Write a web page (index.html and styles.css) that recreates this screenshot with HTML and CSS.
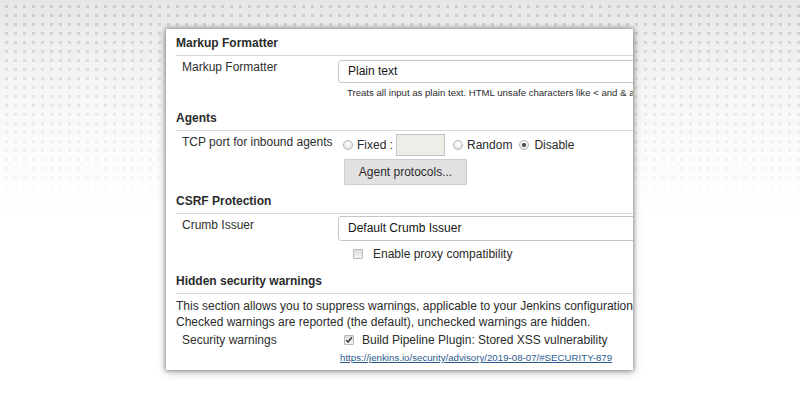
FILE: index.html
```html
<!DOCTYPE html>
<html>
<head>
<meta charset="utf-8">
<link rel="stylesheet" href="styles.css">
</head>
<body>
<div class="stage">
  <div class="panel">
    <div class="head">Markup Formatter</div>
    <div class="row">
      <div class="label">Markup Formatter</div>
      <div class="field">
        <div class="select sel-markup">Plain text</div>
        <div class="help">Treats all input as plain text. HTML unsafe characters like &lt; and &amp; are escaped to their respective character entities.</div>
      </div>
    </div>

    <div class="head head-agents">Agents</div>
    <div class="row">
      <div class="label">TCP port for inbound agents</div>
      <div class="field field-tcp">
        <div class="options">
          <input type="radio" name="port" class="radio r-fixed"><span class="opt-text">Fixed :</span>
          <input type="text" class="port">
          <input type="radio" name="port" class="radio r-random"><span class="opt-text">Random</span>
          <input type="radio" name="port" class="radio r-disable" checked><span class="opt-text">Disable</span>
        </div>
        <button class="btn">Agent protocols...</button>
      </div>
    </div>

    <div class="head head-csrf">CSRF Protection</div>
    <div class="row">
      <div class="label">Crumb Issuer</div>
      <div class="field field-crumb">
        <div class="select sel-crumb">Default Crumb Issuer</div>
        <div class="check-row check-proxy">
          <input type="checkbox" class="check"><span class="check-text">Enable proxy compatibility</span>
        </div>
      </div>
    </div>

    <div class="head head-hidden">Hidden security warnings</div>
    <p class="para">This section allows you to suppress warnings, applicable to your Jenkins configuration, from being shown in the UI.<br>Checked warnings are reported (the default), unchecked warnings are hidden.</p>
    <div class="row row-sec">
      <div class="label label-sec">Security warnings</div>
      <div class="field">
        <div class="check-row check-sec">
          <input type="checkbox" class="check" checked><span class="check-text sec-text">Build Pipeline Plugin: Stored XSS vulnerability</span>
        </div>
        <a class="link" href="#">https://jenkins.io/security/advisory/2019-08-07/#SECURITY-879</a>
      </div>
    </div>
  </div>
</div>
</body>
</html>
```

FILE: styles.css
```css
html, body {
  margin: 0;
  padding: 0;
}

body {
  width: 800px;
  height: 400px;
  overflow: hidden;
  background:
    linear-gradient(to bottom, rgba(255,255,255,0) 0px, rgba(255,255,255,0.5) 90px, #ffffff 220px),
    radial-gradient(circle, #c9c9c9 0 1.4px, rgba(201,201,201,0) 1.9px) 2px 2px / 9px 9px,
    linear-gradient(to bottom, #e6e6e6 0px, #f2f2f2 150px, #ffffff 300px);
  font-family: "Liberation Sans", Arial, sans-serif;
}

.stage {
  box-sizing: border-box;
  height: 400px;
  padding: 29px 0 0 166px;
}

.panel {
  box-sizing: border-box;
  width: 467px;
  height: 341px;
  padding-left: 10px;
  background: #ffffff;
  overflow: hidden;
  box-shadow: 0 0 4px 1px rgba(0,0,0,0.32), 0 2px 9px rgba(0,0,0,0.25);
  font-size: 12px;
  color: #2b2b2b;
}

.head {
  padding: 7px 0 5px;
  line-height: 14px;
  font-weight: bold;
  color: #2b2b2b;
  border-bottom: 1px solid #d9d9d9;
  white-space: nowrap;
}

.head-agents { margin-top: 5px; }
.head-csrf { margin-top: 2px; }
.head-hidden { margin-top: 6px; }

.row {
  display: flex;
  align-items: flex-start;
}

.label {
  flex: none;
  box-sizing: border-box;
  width: 162px;
  padding: 4px 0 0 6px;
  line-height: 14px;
  white-space: nowrap;
  color: #2e2e2e;
}

.field {
  flex: none;
  width: 440px;
  padding-top: 4px;
}

.select {
  box-sizing: border-box;
  width: 420px;
  height: 23px;
  line-height: 21px;
  padding-left: 9px;
  border: 1px solid #c6c6c6;
  border-radius: 3px;
  background: #ffffff;
  color: #151515;
  white-space: nowrap;
}

.help {
  margin-top: 4px;
  padding-left: 9px;
  font-size: 9.6px;
  line-height: 12px;
  white-space: nowrap;
  color: #2b2b2b;
}

.field-tcp { padding-top: 3px; }

.options {
  display: flex;
  align-items: center;
  height: 22px;
}

.radio {
  -webkit-appearance: none;
  appearance: none;
  box-sizing: border-box;
  width: 10px;
  height: 10px;
  margin: 0;
  border-radius: 50%;
  border: 1px solid #b4b4b4;
  background: radial-gradient(circle at 50% 35%, #ffffff 0, #e0e0e0 100%);
  flex: none;
}

.radio:checked {
  background:
    radial-gradient(circle, #555555 0 1.8px, rgba(85,85,85,0) 2.4px),
    radial-gradient(circle at 50% 35%, #ffffff 0, #e0e0e0 100%);
}

.r-fixed { margin-left: 5px; }
.r-random { margin-left: 8px; }
.r-disable { margin-left: 7px; }

.opt-text {
  margin-left: 4px;
  white-space: nowrap;
  line-height: 14px;
}

.r-disable + .opt-text { margin-left: 5px; }

.port {
  box-sizing: border-box;
  width: 49px;
  height: 22px;
  margin: 0 0 0 3px;
  padding: 0;
  border: 1px solid #c4c4c4;
  background: #eeede7;
}

.btn {
  display: block;
  box-sizing: border-box;
  width: 123px;
  height: 26px;
  margin: 3px 0 0 6px;
  padding: 0;
  border: 1px solid #cdcdcd;
  border-radius: 1px;
  background: #e1e1e1;
  font-family: "Liberation Sans", Arial, sans-serif;
  font-size: 12px;
  color: #2b2b2b;
}

.field-crumb { padding-top: 2px; }
.sel-crumb { height: 25px; line-height: 23px; }

.check-row {
  display: flex;
  align-items: center;
  white-space: nowrap;
}

.check {
  -webkit-appearance: none;
  appearance: none;
  box-sizing: border-box;
  flex: none;
  width: 10px;
  height: 10px;
  margin: 0;
  border: 1px solid #b9b9b9;
  border-radius: 1px;
  background: linear-gradient(#dcdcdc, #f5f5f5);
}

.check:checked {
  background:
    url("data:image/svg+xml,%3Csvg xmlns='http://www.w3.org/2000/svg' width='8' height='8' viewBox='0 0 8 8'%3E%3Cpath d='M1.2 4.2 L3.1 6 L6.8 1.6' fill='none' stroke='%23333' stroke-width='1.5'/%3E%3C/svg%3E") center / 8px 8px no-repeat,
    linear-gradient(#dcdcdc, #f5f5f5);
}

.check-proxy {
  margin-top: 6px;
  line-height: 14px;
}

.check-proxy .check { margin-left: 15px; }
.check-proxy .check-text { margin-left: 10px; }

.para {
  margin: 4px 0 0;
  line-height: 16px;
  white-space: nowrap;
  color: #2b2b2b;
}

.row-sec { margin-top: 2px; }
.label-sec { padding-top: 0; line-height: 16px; }
.row-sec .field { padding-top: 0; }

.check-sec { line-height: 16px; }
.check-sec .check { margin-left: 6px; }
.check-sec .check-text { margin-left: 8px; }

.link {
  display: block;
  margin-top: 4px;
  padding-left: 2px;
  font-size: 9.7px;
  line-height: 12px;
  color: #2d5b8f;
  text-decoration: underline;
  white-space: nowrap;
}
```
